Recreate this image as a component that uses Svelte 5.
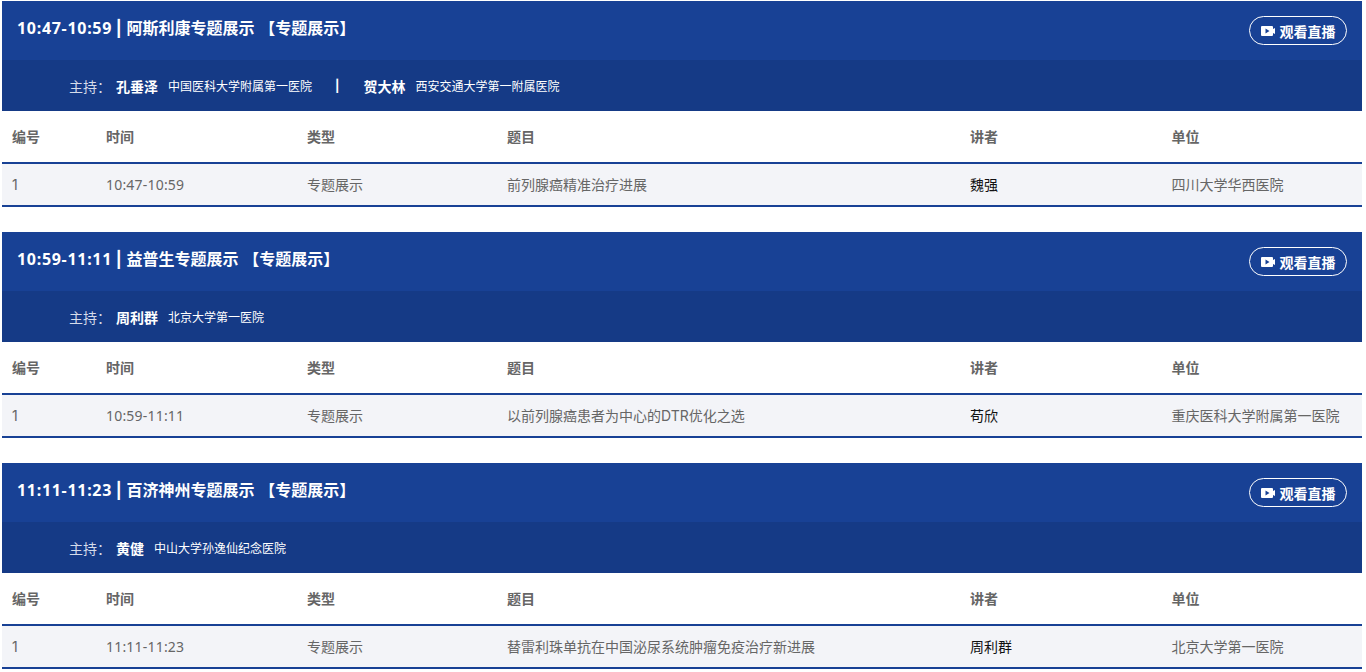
<script>
  const cols = ['编号', '时间', '类型', '题目', '讲者', '单位'];
  const sessions = [
    { time: '10:47-10:59', name: '阿斯利康专题展示', hosts: [['孔垂泽', '中国医科大学附属第一医院'], ['贺大林', '西安交通大学第一附属医院']], topic: '前列腺癌精准治疗进展', speaker: '魏强', org: '四川大学华西医院' },
    { time: '10:59-11:11', name: '益普生专题展示', hosts: [['周利群', '北京大学第一医院']], topic: '以前列腺癌患者为中心的DTR优化之选', speaker: '苟欣', org: '重庆医科大学附属第一医院' },
    { time: '11:11-11:23', name: '百济神州专题展示', hosts: [['黄健', '中山大学孙逸仙纪念医院']], topic: '替雷利珠单抗在中国泌尿系统肿瘤免疫治疗新进展', speaker: '周利群', org: '北京大学第一医院' }
  ];
</script>

<main class="page">
  {#each sessions as s}
    <section class="session">
      <header class="head">
        <h2><span class="clock">{s.time}</span> | <span class="name">{s.name} 【专题展示】</span></h2>
        <span class="live">
          <svg width="14" height="10" viewBox="0 0 14 10" aria-hidden="true">
            <path fill="#fff" fill-rule="evenodd" d="M1 0h10a1 1 0 0 1 1 1v2l2-1v6l-2-1v2a1 1 0 0 1-1 1H1a1 1 0 0 1-1-1V1a1 1 0 0 1 1-1zM4.500 2.500v5L8.500 5z"/>
          </svg>
          观看直播
        </span>
      </header>
      <div class="hosts">
        <span class="label">主持：</span>
        {#each s.hosts as h, i}
          {#if i > 0}<span class="sep">|</span>{/if}
          <b>{h[0]}</b><span class="org">{h[1]}</span>
        {/each}
      </div>
      <div class="row titles">
        {#each cols as c}<div>{c}</div>{/each}
      </div>
      <div class="row data">
        <div>1</div>
        <div class="when">{s.time}</div>
        <div>专题展示</div>
        <div>{s.topic}</div>
        <div class="speaker">{s.speaker}</div>
        <div>{s.org}</div>
      </div>
    </section>
  {/each}
</main>

<style>
  :global(body) {
    margin: 0;
    background: #fff;
  }
  .page {
    padding: 1px 4px 0 2px;
    font-family: Inter, "Noto Sans CJK SC", sans-serif;
    height: 671px;
    overflow: hidden;
  }
  .session {
    margin-bottom: 25px;
  }
  .head {
    height: 59px;
    background: #184195;
    color: #fff;
    display: flex;
    justify-content: space-between;
    padding: 0 15px;
    box-sizing: border-box;
  }
  h2 {
    margin: 0;
    font-size: 16px;
    font-weight: 700;
    line-height: 55px;
  }
  .clock {
    font-family: "Noto Sans", sans-serif;
    letter-spacing: 0.7px;
  }
  .name {
    margin-left: 1px;
    word-spacing: 1px;
  }
  .live {
    margin-top: 15px;
    height: 29px;
    width: 98px;
    box-sizing: border-box;
    border: 1px solid #fff;
    border-radius: 15px;
    display: flex;
    align-items: center;
    justify-content: center;
    gap: 5px;
    font-size: 14px;
    font-weight: 700;
    white-space: nowrap;
  }
  .hosts {
    height: 51px;
    background: #153a86;
    padding-left: 67px;
    display: flex;
    align-items: center;
    color: #fff;
    box-sizing: border-box;
  }
  .label {
    font-size: 14px;
    color: #d5dcea;
    width: 47px;
    white-space: nowrap;
  }
  b {
    font-size: 14px;
    margin-right: 10px;
  }
  .org {
    font-size: 12px;
  }
  .sep {
    font-size: 12px;
    font-weight: 700;
    margin: 0 24px 0 23px;
  }
  .row {
    display: grid;
    grid-template-columns: 94px 201px 200px 463px 201.5px 198.500px;
    color: #666;
    font-size: 14px;
  }
  .row > div {
    padding-left: 10px;
    white-space: nowrap;
  }
  .row > .when {
    font-family: "Noto Sans", sans-serif;
    letter-spacing: 0.2px;
  }
  .titles {
    height: 53px;
    line-height: 52px;
    font-weight: 700;
    box-sizing: border-box;
    border-bottom: 2px solid #184195;
  }
  .data {
    height: 43px;
    line-height: 41px;
    box-sizing: border-box;
    background: #f3f4f8;
    border-bottom: 2px solid #184195;
  }
  .speaker {
    color: #111;
  }
</style>
